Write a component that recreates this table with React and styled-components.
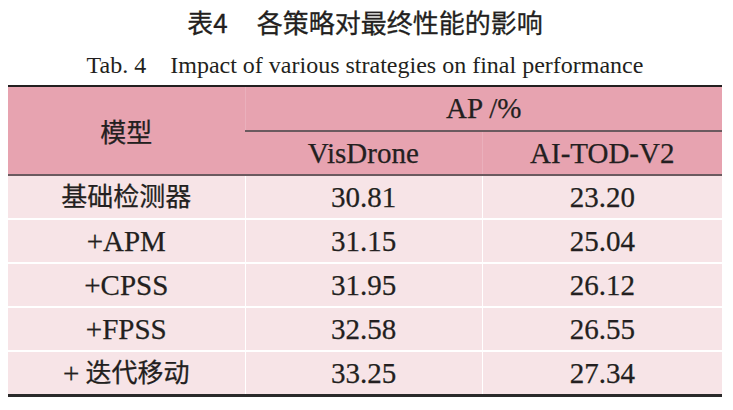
import React from "react";
import styled, { createGlobalStyle } from "styled-components";

const Global = createGlobalStyle`
  html, body { margin: 0; padding: 0; background: #ffffff; }
  body { width: 733px; height: 410px; overflow: hidden; }
`;

const serif = `"Liberation Serif", "Times New Roman", serif`;
const cjk = `"Noto Sans CJK SC", sans-serif`;

const Page = styled.div`
  width: 733px;
  padding: 0 11px 0 8px;
  box-sizing: border-box;
  color: #231f20;
`;

const Title = styled.h1`
  margin: 0;
  padding-top: 9px;
  height: 36px;
  text-align: center;
  font-family: ${cjk};
  font-size: 26px;
  font-weight: 400;
  line-height: 26px;
  color: #231f20;
  -webkit-text-stroke: 0.3px #231f20;
`;

const Gap = styled.span`
  display: inline-block;
  width: ${(p) => p.w}px;
`;

const Subtitle = styled.p`
  margin: 0;
  height: 40px;
  text-align: center;
  font-family: ${serif};
  font-size: 24px;
  line-height: 40px;
  color: #231f20;
`;

const Table = styled.table`
  width: 714px;
  border-collapse: collapse;
  table-layout: fixed;
  border-top: 2px solid #231f20;
  border-bottom: 3px solid #2a2a2a;
  font-family: ${serif};
  color: #231f20;
`;

const HeadCell = styled.th`
  background: #e7a3b0;
  color: #231f20;
  font-weight: 400;
  font-size: ${(p) => (p.$cjk ? 26 : 29)}px;
  font-family: ${(p) => (p.$cjk ? cjk : serif)};
  -webkit-text-stroke: 0.25px #231f20;
  height: ${(p) => p.$h}px;
  padding: 0;
  text-align: center;
  vertical-align: middle;
  line-height: 1;
  border-left: 1px solid #eab0bc;
  border-top: ${(p) => (p.$ruled ? "2px solid #6b5a5f" : "none")};
  border-bottom: ${(p) => (p.$last ? "2px solid #6b5a5f" : "none")};
  &:first-child { border-left: none; }
`;

const Row = styled.tr`
  background: #f7e4e7;
  & + & td { border-top: 2px solid #ffffff; }
`;

const Cell = styled.td`
  height: 42px;
  padding: 0;
  text-align: center;
  vertical-align: middle;
  font-family: ${serif};
  font-size: 29px;
  color: #231f20;
  -webkit-text-stroke: 0.25px #231f20;
  line-height: 1;
  border-left: 1px solid #ffffff;
  &:first-child { border-left: none; }
`;

const Cjk = styled.span`
  font-family: ${cjk};
  font-size: 26px;
  position: relative;
  top: -1px;
`;

const Plus = styled.span`
  font-family: ${serif};
  font-size: 29px;
  margin-right: ${(p) => p.$space || 0}px;
`;

const rows = [
  { name: <Cjk>基础检测器</Cjk>, a: "30.81", b: "23.20" },
  { name: "+APM", a: "31.15", b: "25.04" },
  { name: "+CPSS", a: "31.95", b: "26.12" },
  { name: "+FPSS", a: "32.58", b: "26.55" },
  {
    name: (
      <>
        <Plus $space={6}>+</Plus>
        <Cjk>迭代移动</Cjk>
      </>
    ),
    a: "33.25",
    b: "27.34",
  },
];

export default function App() {
  return (
    <>
      <Global />
      <Page>
        <Title>
          表4<Gap w={29} />各策略对最终性能的影响
        </Title>
        <Subtitle>
          Tab. 4<Gap w={24} />Impact of various strategies on final performance
        </Subtitle>
        <Table>
          <colgroup>
            <col style={{ width: "237px" }} />
            <col style={{ width: "237px" }} />
            <col style={{ width: "240px" }} />
          </colgroup>
          <thead>
            <tr>
              <HeadCell rowSpan={2} $cjk $h={87} $last>
                模型
              </HeadCell>
              <HeadCell colSpan={2} $h={43}>
                AP /%
              </HeadCell>
            </tr>
            <tr>
              <HeadCell $h={42} $ruled $last>
                VisDrone
              </HeadCell>
              <HeadCell $h={42} $ruled $last>
                AI-TOD-V2
              </HeadCell>
            </tr>
          </thead>
          <tbody>
            {rows.map((r, i) => (
              <Row key={i}>
                <Cell>{r.name}</Cell>
                <Cell>{r.a}</Cell>
                <Cell>{r.b}</Cell>
              </Row>
            ))}
          </tbody>
        </Table>
      </Page>
    </>
  );
}
